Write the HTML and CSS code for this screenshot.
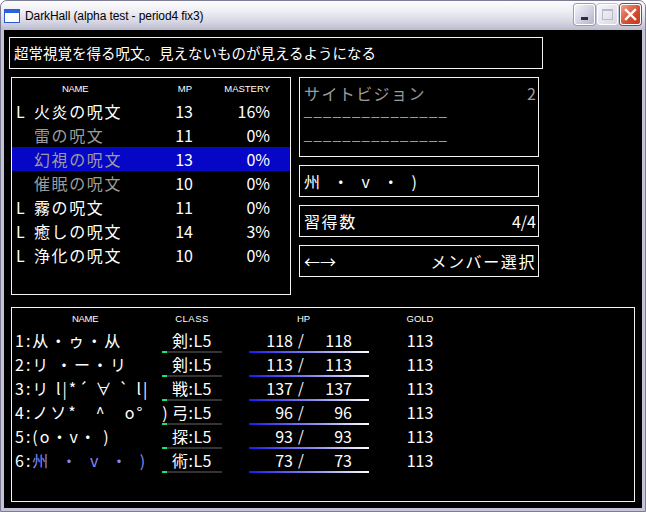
FILE: index.html
```html
<!DOCTYPE html>
<html lang="ja">
<head>
    <meta charset="UTF-8">
    <title>DarkHall (alpha test - period4 fix3)</title>
    <link rel="stylesheet" href="styles.css">
</head>
<body>
    <div class="window">
        <div class="titlebar">
            <svg class="app-icon" width="16" height="16" viewBox="0 0 16 16">
                <rect x="0.5" y="1.5" width="15" height="13" fill="#fff" stroke="#2a5bd0"/>
                <rect x="1" y="2" width="14" height="3" fill="#2a62e0"/>
            </svg>
            <span class="title">DarkHall (alpha test - period4 fix3)</span>
            <div class="caption-buttons">
                <span class="cap-btn min"><i></i></span>
                <span class="cap-btn max"><i></i></span>
                <span class="cap-btn close">
                    <svg width="13" height="13" viewBox="0 0 13 13">
                        <path d="M2 2 L11 11 M11 2 L2 11" stroke="#fff" stroke-width="2.4" stroke-linecap="square"/>
                    </svg>
                </span>
            </div>
        </div>

        <div class="client">
            <div class="panel desc">超常視覚を得る呪文。見えないものが見えるようになる</div>

            <div class="middle">
                <div class="panel spells">
                    <div class="spell-row head">
                        <span></span><span class="h-name">NAME</span><span>MP</span><span>MASTERY</span>
                    </div>
                    <div class="spell-row"><span>L</span><span>火炎の呪文</span><span>13</span><span>16%</span></div>
                    <div class="spell-row dim"><span></span><span>雷の呪文</span><span>11</span><span>0%</span></div>
                    <div class="spell-row dim selected"><span></span><span>幻視の呪文</span><span>13</span><span>0%</span></div>
                    <div class="spell-row dim"><span></span><span>催眠の呪文</span><span>10</span><span>0%</span></div>
                    <div class="spell-row"><span>L</span><span>霧の呪文</span><span>11</span><span>0%</span></div>
                    <div class="spell-row"><span>L</span><span>癒しの呪文</span><span>14</span><span>3%</span></div>
                    <div class="spell-row"><span>L</span><span>浄化の呪文</span><span>10</span><span>0%</span></div>
                </div>

                <div class="side">
                    <div class="panel spell-info">
                        <div class="info-title"><span>サイトビジョン</span><span>2</span></div>
                        <div class="dash">───────────────</div>
                        <div class="dash">───────────────</div>
                    </div>
                    <div class="panel line face">州 ・ v ・ )</div>
                    <div class="panel line split"><span>習得数</span><span class="num">4/4</span></div>
                    <div class="panel line split"><span class="arrows">←→</span><span>メンバー選択</span></div>
                </div>
            </div>

            <div class="panel party">
                <div class="member head">
                    <span class="h-name">NAME</span><span class="cls">CLASS</span><span></span><span class="h-hp">HP</span><span class="gold">GOLD</span>
                </div>
                <div class="member">
                    <span class="name">1:从・ゥ・从</span>
                    <span class="cls bar">剣:L5</span><span></span>
                    <span class="hp bar"><b>118</b><i>/</i><b>118</b></span>
                    <span class="gold">113</span>
                </div>
                <div class="member">
                    <span class="name">2:リ ・ー・リ</span>
                    <span class="cls bar">剣:L5</span><span></span>
                    <span class="hp bar"><b>113</b><i>/</i><b>113</b></span>
                    <span class="gold">113</span>
                </div>
                <div class="member">
                    <span class="name">3:リ l|*´ ∀ ` l|</span>
                    <span class="cls bar">戦:L5</span><span></span>
                    <span class="hp bar"><b>137</b><i>/</i><b>137</b></span>
                    <span class="gold">113</span>
                </div>
                <div class="member">
                    <span class="name">4:ノソ*　^　o°　)</span>
                    <span class="cls bar">弓:L5</span><span></span>
                    <span class="hp bar"><b>96</b><i>/</i><b>96</b></span>
                    <span class="gold">113</span>
                </div>
                <div class="member">
                    <span class="name">5:(o・v・ )</span>
                    <span class="cls bar">探:L5</span><span></span>
                    <span class="hp bar"><b>93</b><i>/</i><b>93</b></span>
                    <span class="gold">113</span>
                </div>
                <div class="member">
                    <span class="name">6:<em class="face">州 ・ v ・ )</em></span>
                    <span class="cls bar">術:L5</span><span></span>
                    <span class="hp bar"><b>73</b><i>/</i><b>73</b></span>
                    <span class="gold">113</span>
                </div>
            </div>
        </div>
    </div>
</body>
</html>
```

FILE: styles.css
```css
body {
    margin: 0;
    background: #fff;
    font-family: "Noto Sans CJK JP", sans-serif;
}
.window {
    width: 646px;
    height: 512px;
    box-sizing: border-box;
    background: #c4c4d6;
    border: 1px solid #7c7c94;
    border-radius: 7px 7px 0 0;
    display: flex;
    flex-direction: column;
}
.titlebar {
    height: 29px;
    display: flex;
    align-items: center;
    padding: 0 4px 0 3px;
    background: linear-gradient(#fdfdfe, #eeeef4 35%, #d8d8e4 70%, #babace);
    border-radius: 6px 6px 0 0;
}
.app-icon {
    margin-right: 5px;
}
.title {
    font-family: "Liberation Sans", sans-serif;
    font-size: 12px;
    letter-spacing: -0.1px;
    color: #000;
    flex: 1;
}
.caption-buttons {
    display: flex;
    gap: 2px;
    margin-top: -3px;
}
.cap-btn {
    width: 21px;
    height: 21px;
    box-sizing: border-box;
    border: 1px solid #fff;
    border-radius: 3px;
    display: flex;
    align-items: center;
    justify-content: center;
    box-shadow: 0 0 0 1px #9a9ab4;
}
.cap-btn.min {
    background: linear-gradient(135deg, #f4f4fa, #b4b4cc);
}
.cap-btn.min i {
    width: 7px;
    height: 3px;
    background: #2c2c40;
    margin-top: 8px;
}
.cap-btn.max {
    background: linear-gradient(135deg, #f6f6fa, #d8d8e4);
    box-shadow: 0 0 0 1px #c4c4d4;
}
.cap-btn.max i {
    width: 9px;
    height: 8px;
    border: 1px solid #b8b8c8;
    border-top-width: 2px;
}
.cap-btn.close {
    background: linear-gradient(135deg, #f0a08c, #d24a30 60%, #c03a22);
    box-shadow: 0 0 0 1px #a04040;
}
.client {
    margin: 0 3px 3px;
    flex: 1;
    background: #000;
    padding: 7px 0 0 5px;
    color: #fff;
}
.panel {
    border: 1px solid #f4f4f4;
    box-sizing: border-box;
}
.desc {
    width: 534px;
    height: 32px;
    line-height: 29px;
    padding-left: 4px;
    font-size: 14.5px;
}
.middle {
    display: flex;
    margin: 8px 0 0 2px;
}
.spells {
    width: 280px;
    height: 218px;
}
.spell-row {
    display: grid;
    grid-template-columns: 18px 126px 33px 77px;
    padding-left: 4px;
    height: 24px;
    line-height: 24px;
    font-size: 16px;
}
.spell-row span:nth-child(2) {
    letter-spacing: 1.6px;
}
.spell-row span:nth-child(3),
.spell-row span:nth-child(4) {
    text-align: right;
}
.spell-row.head {
    height: 21px;
    line-height: 21px;
    font-family: "Liberation Sans", sans-serif;
    font-size: 9.5px;
}
.spell-row.head .h-name {
    padding-left: 28px;
    letter-spacing: -0.3px;
}
.spell-row.head span:nth-child(3) {
    padding-right: 1px;
}
.spell-row.dim span:nth-child(2) {
    color: #9c9c9c;
}
.spell-row.selected {
    background: #0606c6;
}
.side {
    margin-left: 8px;
    width: 240px;
    display: flex;
    flex-direction: column;
    gap: 8px;
}
.spell-info {
    height: 80px;
    padding: 3px 2px 0 4px;
    color: #9c9c9c;
    font-size: 16px;
}
.info-title {
    display: flex;
    justify-content: space-between;
    line-height: 24px;
    letter-spacing: 1.4px;
}
.info-title span:last-child {
    letter-spacing: 0;
}
.dash {
    font-family: "DejaVu Sans Mono", monospace;
    font-size: 13px;
    letter-spacing: 1.8px;
    height: 22px;
    padding-top: 2px;
    line-height: 22px;
}
.line {
    height: 32px;
    line-height: 30px;
    padding: 0 2px 0 4px;
    font-size: 16px;
}
.face {
    letter-spacing: 1.6px;
    word-spacing: 6px;
}
.split {
    display: flex;
    justify-content: space-between;
    letter-spacing: 1.6px;
}
.split .num,
.split .arrows {
    letter-spacing: 0;
}
.party {
    width: 624px;
    height: 195px;
    margin: 12px 0 0 2px;
    padding-left: 3px;
}
.member {
    display: grid;
    grid-template-columns: 147px 60px 27px 120px 102px;
    height: 24px;
    font-size: 16px;
    line-height: 22px;
}
.member.head {
    height: 21px;
    line-height: 21px;
    font-family: "Liberation Sans", sans-serif;
    font-size: 9.5px;
}
.member.head .h-name {
    padding-left: 57px;
    letter-spacing: -0.3px;
}
.member.head .h-hp {
    text-align: center;
    padding-right: 11px;
}
.name {
    white-space: nowrap;
    letter-spacing: 2px;
}
.name em {
    font-style: normal;
    color: #8888f4;
}
.cls {
    text-align: center;
    letter-spacing: 0.5px;
}
.cls.bar {
    background: linear-gradient(to right, #18e07c 5px, #333 5px) bottom / 100% 2px no-repeat;
}
.hp {
    display: flex;
}
.hp.bar {
    background: linear-gradient(to right, #1a1af0, #8c8cf0 55%, #fff) bottom / 100% 2px no-repeat;
}
.hp b {
    font-weight: normal;
    width: 44px;
    text-align: right;
}
.hp b:last-child {
    width: 48px;
}
.hp i {
    font-style: normal;
    margin-left: 5px;
    width: 6px;
    font-size: 15px;
}
.gold {
    text-align: center;
}
```
